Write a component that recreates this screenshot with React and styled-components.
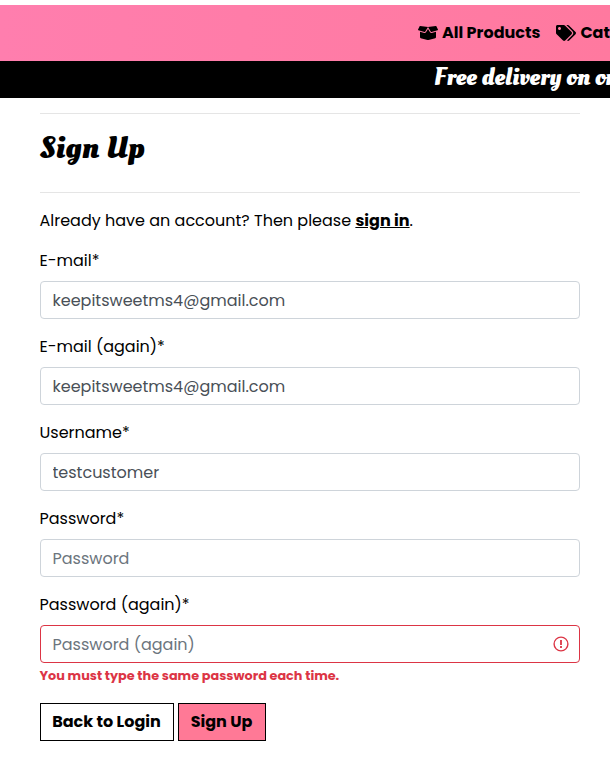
import React from 'react';
import styled, { createGlobalStyle } from 'styled-components';
import { FaBoxOpen, FaTags } from 'react-icons/fa';

const GlobalStyle = createGlobalStyle`
  *, *::before, *::after { box-sizing: border-box; }
  html { overflow: hidden; }
  body {
    margin: 0;
    background: #fff;
    color: #000;
    font: 400 16px/24px Poppins, Inter, sans-serif;
  }
`;

const Page = styled.div`
  width: 100%;
  padding-top: 5px;
  overflow: hidden;
`;

const Navbar = styled.nav`
  display: flex;
  align-items: center;
  gap: 16px;
  height: 56px;
  padding-left: 418px;
  background: linear-gradient(to right, #ff7eae, #ff799f);
`;

const NavItem = styled.a`
  display: flex;
  flex: none;
  align-items: center;
  gap: 4px;
  color: #000;
  font-weight: 700;
  white-space: nowrap;

  svg {
    width: 20px;
    height: 16px;
  }
`;

const Banner = styled.div`
  height: 37px;
  padding-left: 434px;
  background: #000;
  color: #fff;
  font: 700 24px/33px "Oleo Script", "Liberation Serif", serif;
  white-space: nowrap;
`;

const Content = styled.main`
  padding: 15px 30px 0 39.5px;
`;

const Rule = styled.hr`
  height: 1px;
  margin: 0;
  border: 0;
  background: #e5e5e5;
`;

const Title = styled.h1`
  height: 78px;
  margin: 0;
  padding-top: 15px;
  font: 700 32px/38px "Oleo Script", "Liberation Serif", serif;
`;

const Intro = styled.p`
  margin: 16px 0;
`;

const SignInLink = styled.a`
  color: #000;
  font-weight: 700;
  text-decoration: underline;
`;

const Field = styled.div`
  display: flex;
  flex-direction: column;
  margin-bottom: 16px;
`;

const Label = styled.label`
  margin-bottom: 8px;
`;

const Control = styled.div`
  display: flex;
  align-items: center;
  height: 38px;
  padding: 0 10px 0 12px;
  border: 1px solid ${({ $invalid }) => ($invalid ? '#dc3545' : '#ced4da')};
  border-radius: 4px;
`;

const Input = styled.input`
  flex: 1;
  min-width: 0;
  height: 36px;
  padding: 0;
  border: 0;
  outline: 0;
  background: transparent;
  color: #495057;
  font: inherit;

  &::placeholder {
    color: #6c757d;
    opacity: 1;
  }
`;

const ErrorText = styled.strong`
  height: 21px;
  margin-top: 3px;
  color: #dc3545;
  font-size: 12.8px;
  font-weight: 700;
  line-height: 19.2px;
`;

const Actions = styled.div`
  display: flex;
  gap: 4px;
`;

const Button = styled.button`
  width: ${({ $width }) => $width}px;
  height: 38px;
  padding: 0;
  border: 1px solid #000;
  border-radius: 0;
  background: ${({ $primary }) => ($primary ? '#ff7996' : '#fff')};
  color: #000;
  font: inherit;
  font-weight: 700;
`;

const ErrorIcon = () => (
  <svg width="16" height="16" viewBox="0 0 16 16" fill="none" stroke="#dc3545">
    <circle cx="8" cy="8" r="6.9" strokeWidth="1.4" />
    <path d="M8 4v5" strokeWidth="1.8" />
    <path d="M8 10.1v1.8" strokeWidth="1.8" />
  </svg>
);

const fields = [
  { id: 'email', label: 'E-mail*', value: 'keepitsweetms4@gmail.com' },
  { id: 'email2', label: 'E-mail (again)*', value: 'keepitsweetms4@gmail.com' },
  { id: 'username', label: 'Username*', value: 'testcustomer' },
  { id: 'password', label: 'Password*', placeholder: 'Password' },
  {
    id: 'password2',
    label: 'Password (again)*',
    placeholder: 'Password (again)',
    error: 'You must type the same password each time.',
  },
];

export default function App() {
  return (
    <Page>
      <GlobalStyle />
      <Navbar>
        <NavItem><FaBoxOpen />All Products</NavItem>
        <NavItem><FaTags />Categories</NavItem>
      </Navbar>
      <Banner>Free delivery on orders</Banner>
      <Content>
        <Rule />
        <Title>Sign Up</Title>
        <Rule />
        <Intro>
          Already have an account? Then please <SignInLink>sign in</SignInLink>.
        </Intro>
        {fields.map((f) => (
          <Field key={f.id}>
            <Label htmlFor={f.id}>{f.label}</Label>
            <Control $invalid={Boolean(f.error)}>
              <Input id={f.id} defaultValue={f.value} placeholder={f.placeholder} />
              {f.error && <ErrorIcon />}
            </Control>
            {f.error && <ErrorText>{f.error}</ErrorText>}
          </Field>
        ))}
        <Actions>
          <Button $width={134}>Back to Login</Button>
          <Button $width={88} $primary>Sign Up</Button>
        </Actions>
      </Content>
    </Page>
  );
}
